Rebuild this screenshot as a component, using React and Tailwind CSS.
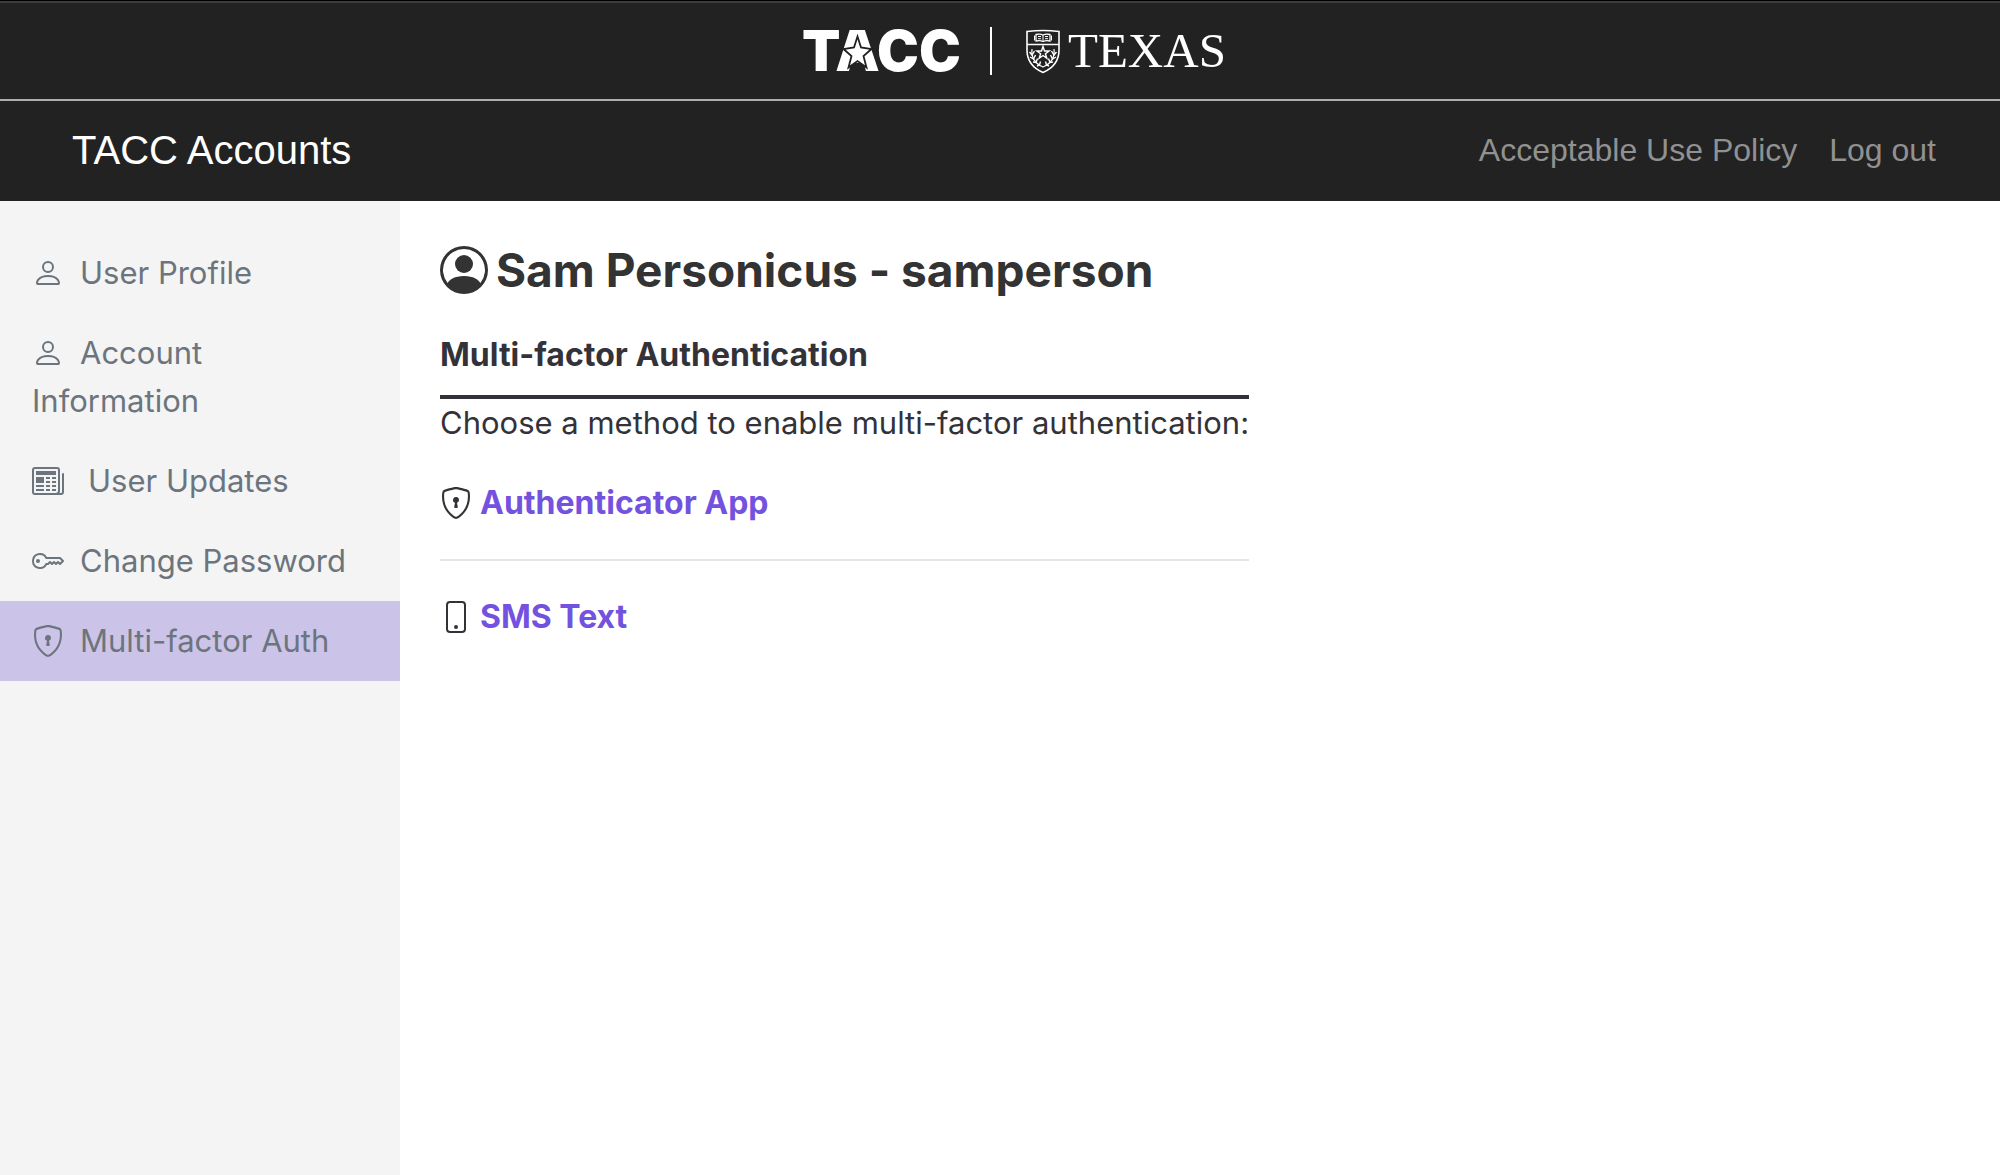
import React from "react";
import {
  BsKey,
  BsNewspaper,
  BsPerson,
  BsPersonCircle,
  BsPhone,
  BsShieldLock,
} from "react-icons/bs";

const menuItems = [
  { label: "User Profile", icon: BsPerson },
  { label: "Account Information", icon: BsPerson },
  { label: "User Updates", icon: BsNewspaper, wide: true },
  { label: "Change Password", icon: BsKey },
  { label: "Multi-factor Auth", icon: BsShieldLock, active: true },
];

const methods = [
  { label: "Authenticator App", icon: BsShieldLock },
  { label: "SMS Text", icon: BsPhone },
];

function TaccLogo() {
  return (
    <svg
      width="160"
      height="72"
      viewBox="0 -12 160 72"
      role="img"
      aria-label="TACC"
      className="fill-white font-[Inter,sans-serif] font-black"
    >
      <text x="0" y="44" fontSize="56">
        TACC
      </text>
      {/* Star over the A */}
      <path
        d="M55.500 9.500L59 20.500L69.500 22L61.500 29L64.500 40.500L55.500 34L46.500 40.500L49.500 29L41.500 22L52 20.500Z"
        stroke="#222222"
        strokeWidth="1.800"
      />
    </svg>
  );
}

function TexasLogo() {
  return (
    <svg
      width="202"
      height="72"
      viewBox="0 -12 202 72"
      role="img"
      aria-label="TEXAS"
    >
      {/* Shield */}
      <g fill="none" stroke="white" transform="translate(1 0)">
        <path
          d="M2 4.500Q18 2.500 34 4.500V23C34 35 26 42 18 45.500C10 42 2 35 2 23Z"
          strokeWidth="1.600"
        />
        <path d="M2 17.500H34" strokeWidth="1.500" />
        <path
          d="M11 7.500Q15 6.500 18 8Q21 6.500 25 7.500V14Q21 13 18 14.500Q15 13 11 14Z"
          strokeWidth="1.300"
        />
        <path
          d="M18 8V14M13 9.500H16M13 11.700H16M20 9.500H23M20 11.700H23M9.500 8.500V13.500M26.500 8.500V13.500"
          strokeWidth="1"
        />
        <path
          d="M18 19.500L19.500 24H24.200L20.400 26.800L21.800 31.200L18 28.500L14.200 31.200L15.600 26.800L11.800 24H16.500Z"
          strokeWidth="1.400"
        />
        <path
          d="M7 22C6 31 11 37 18 40C25 37 30 31 29 22"
          strokeWidth="1.200"
        />
        <path
          d="M4.500 25L7 28L9.500 24M5 30L8.500 32L10.500 28M8 35L11 35.500L12.500 31.500M12 39L14.500 38L15.500 34.500M31.500 25L29 28L26.500 24M31 30L27.500 32L25.500 28M28 35L25 35.500L23.500 31.500M24 39L21.500 38L20.500 34.500"
          strokeWidth="1.400"
        />
      </g>
      <text
        x="44"
        y="40"
        fontSize="49"
        className="fill-white font-[Liberation_Serif,serif]"
      >
        TEXAS
      </text>
    </svg>
  );
}

function Header() {
  return (
    <header className="bg-[#222222] font-[Liberation_Sans,Arial,sans-serif]">
      <div className="border-t border-black">
        <div className="flex h-[100px] items-center justify-center border-t-2 border-b-2 border-t-[#3c3c40] border-b-[#afafaf] pl-7">
          <a href="#tacc">
            <TaccLogo />
          </a>
          <span className="mr-8 ml-7 h-12 w-0.5 bg-white" />
          <a href="#texas">
            <TexasLogo />
          </a>
        </div>
      </div>
      <nav className="flex h-[100px] items-center justify-between pr-16 pb-0.5 pl-[72px]">
        <a href="#home" className="text-[40px] text-white">
          TACC Accounts
        </a>
        <div className="flex gap-8 text-[32px] text-[#919191]">
          <a href="#policy">Acceptable Use Policy</a>
          <a href="#logout">Log out</a>
        </div>
      </nav>
    </header>
  );
}

function Sidebar() {
  return (
    <nav className="w-1/5 shrink-0 bg-[#f4f4f4] pt-8 text-[#6c757d]">
      {menuItems.map(({ label, icon: Icon, wide, active }) => (
        <a
          key={label}
          href="#menu"
          className={`block px-8 py-4 ${active ? "bg-[#ccc4e8]" : ""}`}
        >
          <Icon
            className={`inline-block size-8 align-[-5px] ${wide ? "mr-6" : "mr-4"}`}
          />
          {label}
        </a>
      ))}
    </nav>
  );
}

export default function App() {
  return (
    <div className="flex min-h-screen flex-col bg-white font-[Inter,sans-serif] text-[31px] leading-[48px] text-[#333238]">
      <Header />
      <div className="flex flex-1">
        <Sidebar />
        <main className="px-10 pt-10">
          <h1 className="flex items-center gap-2 text-[46px] leading-[58px] font-bold text-[#333333]">
            <BsPersonCircle className="size-12" />
            Sam Personicus - samperson
          </h1>
          <div className="w-fit">
            <h2 className="mt-8 border-b-4 border-[#333238] pb-4 text-[32px] leading-[48px] font-bold">
              Multi-factor Authentication
            </h2>
            <p>Choose a method to enable multi-factor authentication:</p>
            <ul className="divide-y-2 divide-[#e5e5e5]">
              {methods.map(({ label, icon: Icon }) => (
                <li key={label} className="flex items-center gap-2 py-8">
                  <Icon className="size-8" />
                  <a
                    href="#method"
                    className="text-[32px] leading-[48px] font-bold text-[#7352e0]"
                  >
                    {label}
                  </a>
                </li>
              ))}
            </ul>
          </div>
        </main>
      </div>
    </div>
  );
}
